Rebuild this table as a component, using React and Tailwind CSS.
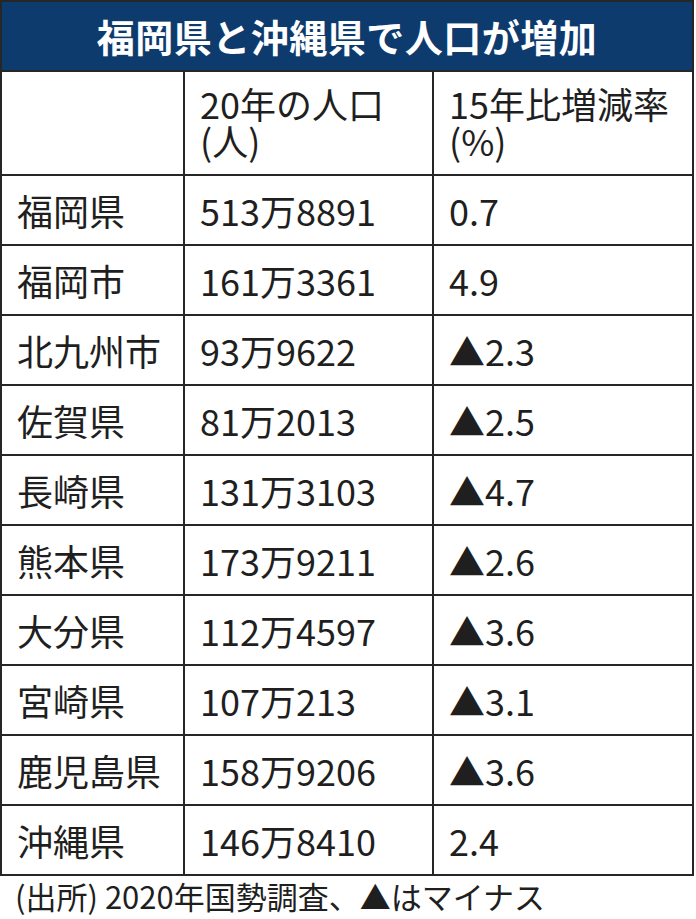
import React from 'react';

const rows = [
  ['福岡県', '513万8891', '0.7'],
  ['福岡市', '161万3361', '4.9'],
  ['北九州市', '93万9622', '▲2.3'],
  ['佐賀県', '81万2013', '▲2.5'],
  ['長崎県', '131万3103', '▲4.7'],
  ['熊本県', '173万9211', '▲2.6'],
  ['大分県', '112万4597', '▲3.6'],
  ['宮崎県', '107万213', '▲3.1'],
  ['鹿児島県', '158万9206', '▲3.6'],
  ['沖縄県', '146万8410', '2.4'],
];

const font = { fontFamily: '"Noto Sans CJK JP", "Noto Sans", sans-serif' };

export default function App() {
  return (
    <div className="w-[696px] h-[919px] bg-white text-[#1f1f1f]" style={font}>
      <div className="w-[694px] border-2 border-[#262626]">
        <div className="h-[68px] bg-[#0e3b6d] flex items-center justify-center">
          <h1 className="text-white font-bold text-[38px] leading-none tracking-[0.5px]">
            福岡県と沖縄県で人口が増加
          </h1>
        </div>

        <div className="grid grid-cols-[181px_249px_1fr] border-t-2 border-[#262626] h-[104px] text-[36px] leading-[37px]">
          <div></div>
          <div className="border-l-2 border-[#262626] pl-[15px] pt-[13px]">
            <div>20年の人口</div>
            <div>(人)</div>
          </div>
          <div className="border-l-2 border-[#262626] pl-[15px] pt-[13px]">
            <div>15年比増減率</div>
            <div>(%)</div>
          </div>
        </div>

        {rows.map(([name, pop, rate]) => (
          <div
            key={name}
            className="grid grid-cols-[181px_249px_1fr] border-t-2 border-[#262626] h-[70px] text-[36px] leading-none"
          >
            <div className="pl-[15px] flex items-center">{name}</div>
            <div className="border-l-2 border-[#262626] pl-[15px] flex items-center">{pop}</div>
            <div className="border-l-2 border-[#262626] pl-[15px] flex items-center">{rate}</div>
          </div>
        ))}
      </div>

      <p className="pl-[15px] pt-[2px] text-[31px] leading-[36px]">(出所) 2020年国勢調査、▲はマイナス</p>
    </div>
  );
}
